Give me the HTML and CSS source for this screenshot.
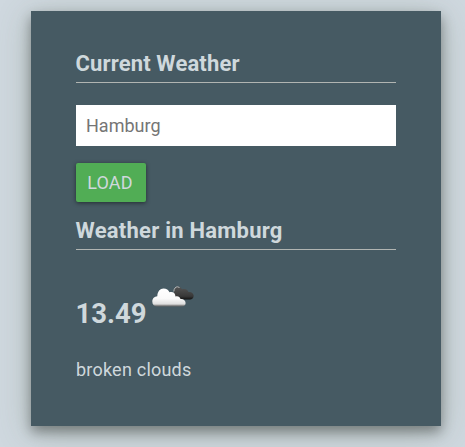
FILE: index.html
```html
<!DOCTYPE html>
<html lang="en">
<head>
<meta charset="utf-8">
<title>Weather</title>
<link rel="stylesheet" href="styles.css">
</head>
<body>
<main class="card">
  <h2 class="title">Current Weather</h2>
  <input class="city" type="text" placeholder="Hamburg">
  <button class="load" type="button">LOAD</button>
  <h2 class="title place">Weather in Hamburg</h2>
  <div class="reading">
    <span class="temp">13.49</span>
    <svg class="icon" width="50" height="50" viewBox="0 0 50 50">
      <defs>
        <linearGradient id="light" x1="0" y1="0" x2="0" y2="1">
          <stop offset="0" stop-color="#fff"/>
          <stop offset=".55" stop-color="#fafafa"/>
          <stop offset=".87" stop-color="#dedede"/>
          <stop offset=".92" stop-color="#999"/>
          <stop offset="1" stop-color="#666"/>
        </linearGradient>
        <linearGradient id="dark" x1="0" y1="0" x2="0" y2="1">
          <stop offset="0" stop-color="#555"/>
          <stop offset=".75" stop-color="#383838"/>
          <stop offset="1" stop-color="#111"/>
        </linearGradient>
      </defs>
      <path fill="url(#dark)" d="M26 20V12C26 10 27.500 8.500 29.500 8.500C31.500 8.500 33 9.500 34 11.300C37.500 10.300 39.500 11.500 40.500 14C43.500 13.500 45.700 15.500 45.700 17.800C45.700 20 44 21.500 42 21.500H31Z"/>
      <path fill="none" stroke="#b5b9ba" stroke-width="1" d="M25.800 13.500C26 10.500 27.500 8.800 29.500 8.800L31.500 9.500"/>
      <path fill="url(#light)" d="M8.500 28.500C6 28.300 4.300 26.500 4.300 23.500C4.300 20.500 6.500 18.500 9.300 18.300C9.500 13.500 12 10.500 15.500 10.500C18.500 10.500 20.500 12 21.500 14.300C25 13.500 27.200 15 27.500 18.500C30 17.700 32 19 32.500 21C35.500 20.700 37.600 22.500 37.600 25C37.600 27 36.300 28.500 34 28.500Z"/>
    </svg>
  </div>
  <p class="summary">broken clouds</p>
</main>
</body>
</html>
```
FILE: styles.css
```css
* {
  box-sizing: border-box;
}

body {
  margin: 0;
  height: 447px;
  overflow: hidden;
  padding: 11px 24px 0 31px;
  background: #cfd8df;
  color: #cfd8dc;
  font-family: Roboto, sans-serif;
  font-size: 18px;
}

.card {
  width: 410px;
  height: 415px;
  padding: 37px 45px 0;
  background: #465a63;
  box-shadow: 0 6px 12px rgba(0, 0, 0, 0.36), 0 6px 32px rgba(90, 110, 80, 0.3);
}

.title {
  margin: 0;
  height: 35px;
  border-bottom: 1px solid #b1b5b2;
  font-size: 22px;
  font-weight: 700;
  line-height: 31px;
  letter-spacing: 0.14px;
  text-indent: -0.5px;
}

.place {
  letter-spacing: 0.24px;
}

.city {
  display: block;
  width: 100%;
  height: 41px;
  margin: 22px 0 17px;
  padding: 0 10px;
  border: 0;
  background: #fff;
  font: 18px Roboto, sans-serif;
}

.city::placeholder {
  color: #757575;
}

.load {
  display: block;
  width: 70px;
  height: 39px;
  margin-bottom: 13px;
  padding: 0 2px 0 0;
  border: 0;
  border-radius: 2px;
  background: #51ad55;
  color: #cfd8dc;
  font: 18px Roboto, sans-serif;
  letter-spacing: 0.15px;
  box-shadow: 0 1px 4px rgba(0, 0, 0, 0.5);
}

.reading {
  display: flex;
  align-items: flex-start;
  height: 73px;
  margin-top: 27px;
}

.temp {
  width: 72px;
  padding-top: 20px;
  font-size: 27.5px;
  font-weight: 700;
  line-height: 34px;
  text-indent: -0.5px;
}

.icon {
  flex: none;
  margin-top: 1px;
}

.summary {
  margin: 8px 0 0;
  line-height: 24px;
  letter-spacing: 0.22px;
}
```
